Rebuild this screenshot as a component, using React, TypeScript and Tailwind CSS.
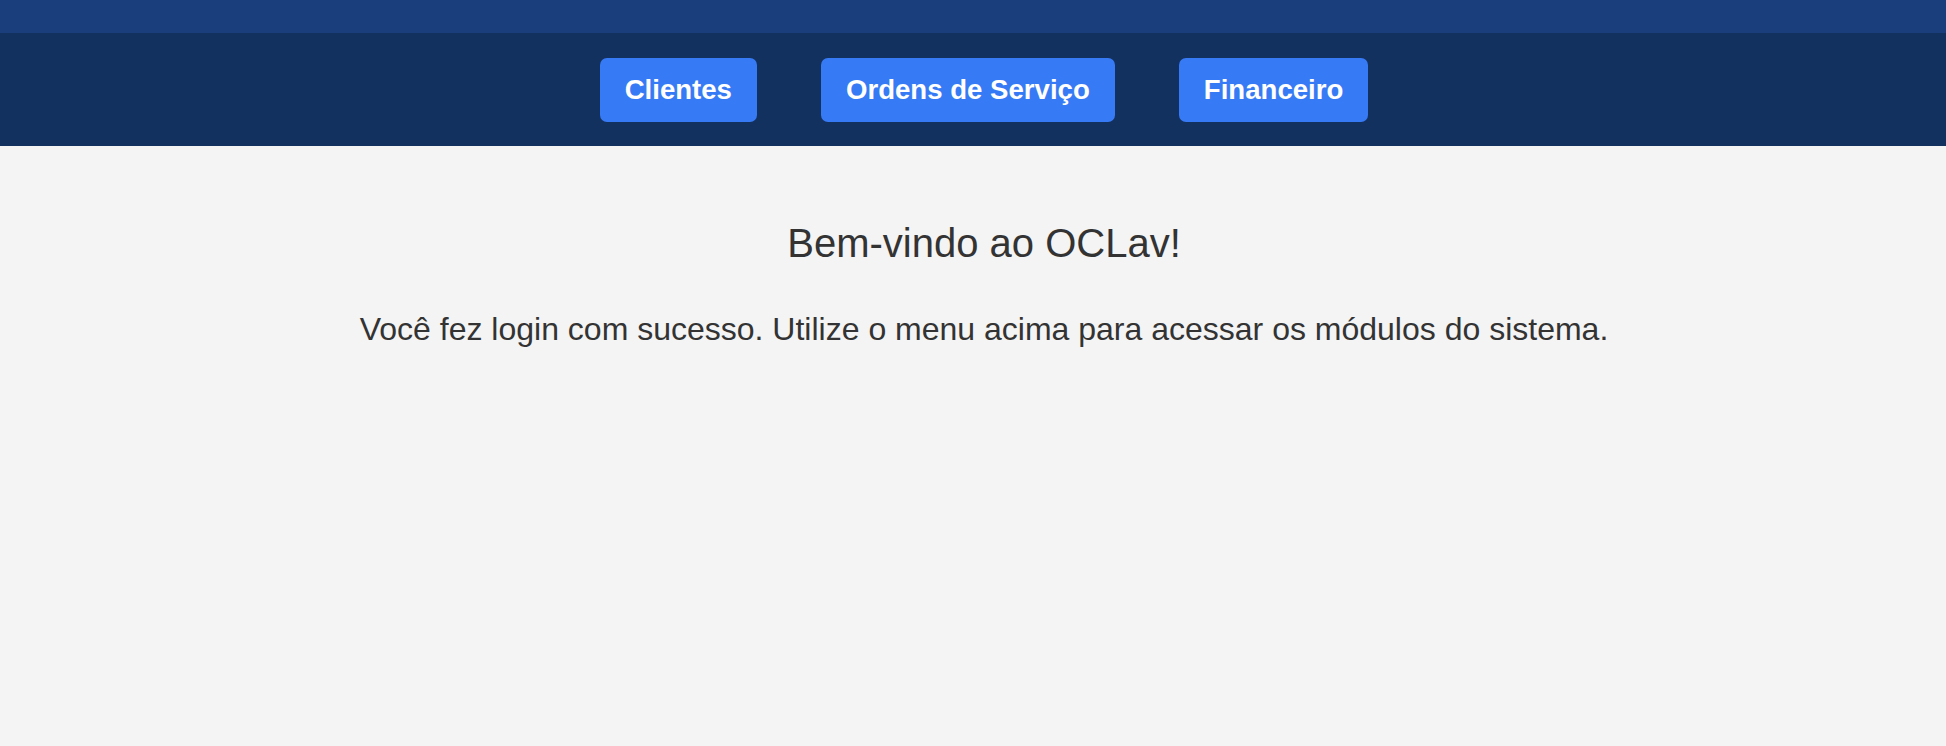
export default function App() {
  const items = ["Clientes", "Ordens de Serviço", "Financeiro"];

  return (
    <div className="min-h-[746px] bg-[#f4f4f4] font-['Liberation_Sans',Arial,sans-serif] text-[#333333]">
      {/* faixa superior */}
      <div className="h-[33px] bg-[#1a3e7c]" />

      {/* menu */}
      <nav className="flex h-[113px] items-center justify-center gap-16 bg-[#13315f] pl-[22px]">
        {items.map((item) => (
          <a
            key={item}
            href="#"
            className="flex h-16 items-center rounded-[7px] bg-[#377af5] px-[25px] text-[27.6px] font-bold text-white"
          >
            {item}
          </a>
        ))}
      </nav>

      <main className="flex flex-col items-center pl-[22px] pt-[74px] text-center">
        <h1 className="text-[40px] leading-[46px]">Bem-vindo ao OCLav!</h1>
        <p className="mt-[45px] text-[32px] leading-[37px]">
          Você fez login com sucesso. Utilize o menu acima para acessar os
          módulos do sistema.
        </p>
      </main>
    </div>
  );
}
